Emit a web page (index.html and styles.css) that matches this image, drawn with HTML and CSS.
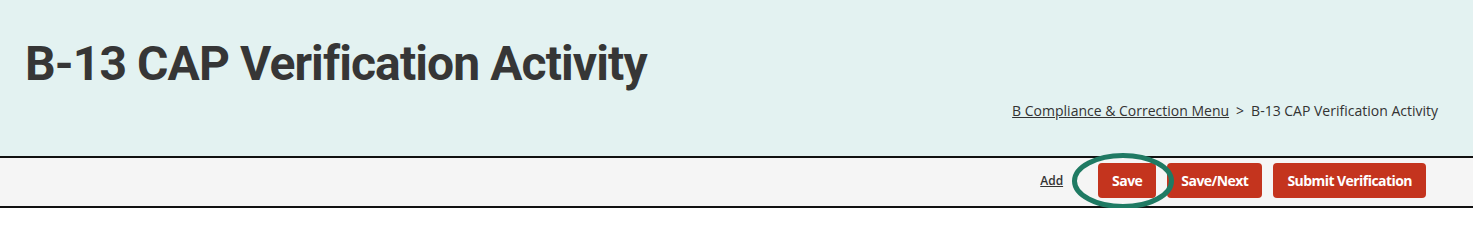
FILE: index.html
```html
<!DOCTYPE html>
<html lang="en">
<head>
<meta charset="utf-8">
<title>B-13 CAP Verification Activity</title>
<link rel="stylesheet" href="styles.css">
</head>
<body>
<header class="page-header">
  <h1 class="page-title">B-13 CAP Verification Activity</h1>
  <nav class="breadcrumb">
    <a href="#" class="crumb-link">B Compliance &amp; Correction Menu</a>
    <span class="crumb-sep">&gt;</span>
    <span class="crumb-current">B-13 CAP Verification Activity</span>
  </nav>
</header>
<div class="toolbar">
  <a href="#" class="add-link">Add</a>
  <div class="save-wrap">
    <button class="btn">Save</button>
    <svg class="highlight" width="104" height="60" viewBox="0 0 104 60" aria-hidden="true">
      <ellipse cx="52" cy="30" rx="48.5" ry="25.5" fill="none" stroke="#1f7a63" stroke-width="5"/>
    </svg>
  </div>
  <button class="btn">Save/Next</button>
  <button class="btn">Submit Verification</button>
</div>
</body>
</html>
```

FILE: styles.css
```css
html, body {
  margin: 0;
  padding: 0;
  background: #ffffff;
}
body {
  font-family: "Open Sans", "Liberation Sans", sans-serif;
  color: #333333;
}
.page-header {
  background: #e3f2f1;
  height: 158px;
  box-sizing: border-box;
  padding: 36px 35px 0 25px;
  display: flex;
  flex-direction: column;
  border-bottom: 2px solid #111111;
}
.page-title {
  margin: 0;
  font-family: Roboto, "Liberation Sans", sans-serif;
  font-weight: 700;
  font-size: 48px;
  line-height: 56px;
  color: #363636;
  letter-spacing: -0.9px;
}
.breadcrumb {
  align-self: flex-end;
  margin-top: 9px;
  font-size: 14px;
  line-height: 20px;
  color: #333333;
  display: flex;
  gap: 7px;
}
.crumb-link {
  color: #333333;
  text-decoration: underline;
}
.toolbar {
  background: #f5f5f5;
  height: 50px;
  box-sizing: border-box;
  border-bottom: 2px solid #111111;
  display: flex;
  justify-content: flex-end;
  align-items: center;
  gap: 11px;
  padding: 0 47px 3px 0;
}
.add-link {
  font-size: 12px;
  font-weight: 600;
  color: #333333;
  text-decoration: underline;
  margin-right: 24px;
}
.save-wrap {
  position: relative;
  display: flex;
}
.btn {
  font-family: "Open Sans", "Liberation Sans", sans-serif;
  font-size: 14px;
  font-weight: 700;
  color: #ffffff;
  background: #c4341e;
  border: none;
  border-radius: 4px;
  height: 35px;
  padding: 0 14px;
  letter-spacing: -0.55px;
}
.highlight {
  position: absolute;
  left: -27px;
  top: -12px;
  pointer-events: none;
}
```
